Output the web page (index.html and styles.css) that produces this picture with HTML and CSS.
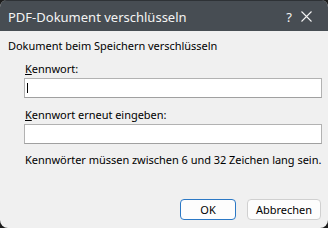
FILE: index.html
```html
<!DOCTYPE html>
<html lang="de">
<head>
<meta charset="utf-8">
<link rel="stylesheet" href="styles.css">
</head>
<body>
<div class="window">
  <div class="titlebar">
    <span class="title">PDF-Dokument verschlüsseln</span>
    <span class="help">?</span>
    <svg class="close" width="11" height="11" viewBox="0 0 11 11"><path d="M0.5 0.5 L10.5 10.5 M10.5 0.5 L0.5 10.5" stroke="#f2f2f2" stroke-width="1.1" fill="none"/></svg>
  </div>
  <div class="content">
    <div class="heading">Dokument beim Speichern verschlüsseln</div>
    <div class="group">
      <div class="label first"><u>K</u>ennwort:</div>
      <div class="field"><span class="caret"></span></div>
      <div class="label second"><u>K</u>ennwort erneut eingeben:</div>
      <div class="field"></div>
      <div class="hint">Kennwörter müssen zwischen 6 und 32 Zeichen lang sein.</div>
    </div>
    <div class="buttons">
      <div class="btn ok">OK</div>
      <div class="btn cancel">Abbrechen</div>
    </div>
  </div>
</div>
</body>
</html>
```

FILE: styles.css
```css
html, body {
  margin: 0;
  padding: 0;
  background: #1c1c1c;
}
body {
  width: 328px;
  height: 228px;
  overflow: hidden;
  font-family: "Noto Sans", "Open Sans", sans-serif;
  font-size: 11px;
  letter-spacing: -0.03px;
  line-height: 14px;
  color: #000;
}
.window {
  width: 328px;
  height: 228px;
  display: flex;
  flex-direction: column;
  background: #f0f0f0;
  border-radius: 7px 7px 8px 8px;
  overflow: hidden;
}
.titlebar {
  height: 31px;
  flex: none;
  background: #474d53;
  display: flex;
  align-items: center;
  color: #f4f4f4;
  border-top: 1px solid #2e3236;
  box-sizing: border-box;
  letter-spacing: 0;
}
.title {
  font-size: 13px;
  margin-left: 8px;
  flex: 1;
  padding-top: 1px;
}
.help {
  font-size: 13px;
  margin-right: 9px;
  padding-top: 2px;
}
.close {
  margin-right: 16px;
}
.content {
  flex: 1;
  display: flex;
  flex-direction: column;
  padding: 8px 6px 8px 8px;
}
.heading {
  white-space: nowrap;
}
.group {
  padding-left: 16px;
  display: flex;
  flex-direction: column;
}
.label {
  padding-left: 1px;
}
.label.first {
  margin-top: 9px;
}
.label.second {
  margin-top: 10px;
}
.label u {
  text-decoration-thickness: 1px;
  text-underline-offset: 1px;
}
.field {
  margin-top: 2px;
  height: 20px;
  box-sizing: border-box;
  background: #fff;
  border: 1px solid #b2b2b2;
  border-bottom-color: #a0a0a0;
  position: relative;
}
.caret {
  position: absolute;
  left: 2px;
  top: 4px;
  width: 1px;
  height: 10px;
  background: #000;
}
.hint {
  margin-top: 9px;
  padding-left: 1px;
  white-space: nowrap;
}
.buttons {
  margin-top: auto;
  display: flex;
  justify-content: flex-end;
  gap: 11px;
  padding-right: 1px;
}
.btn {
  height: 21px;
  box-sizing: border-box;
  border: 1px solid #d0d0d0;
  border-radius: 4px;
  background: #fdfdfd;
  display: flex;
  align-items: center;
  justify-content: center;
  letter-spacing: 0;
  font-size: 11px;
}
.btn.ok {
  width: 56px;
  border-color: #2b78c5;
}
.btn.cancel {
  width: 74px;
}
```
